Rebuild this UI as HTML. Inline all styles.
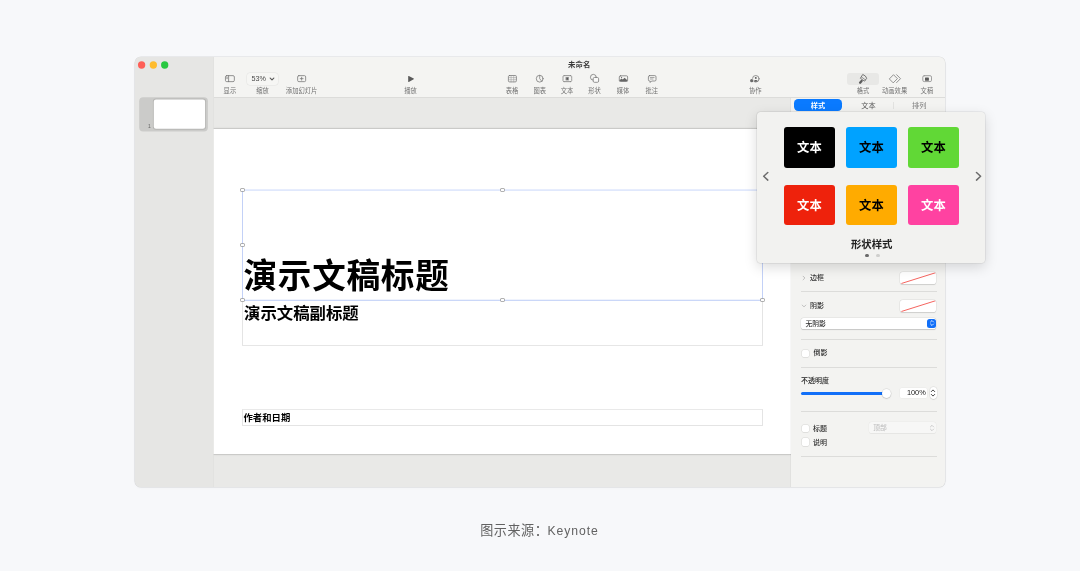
<!DOCTYPE html>
<html lang="zh-CN">
<head>
<meta charset="utf-8">
<title>Keynote</title>
<style>
html,body{margin:0;padding:0;}
body{width:1080px;height:571px;overflow:hidden;background:#f7f8fa;position:relative;
  font-family:"Liberation Sans","Noto Sans CJK SC",sans-serif;color:#333;-webkit-font-smoothing:antialiased;}
.abs{position:absolute;}
#win{position:absolute;left:134.5px;top:56.5px;width:810.5px;height:430px;border-radius:6px;overflow:hidden;
  background:#e9e9e7;box-shadow:0 0 0 0.6px rgba(0,0,0,0.12),0 1px 3px rgba(0,0,0,0.03);}
#sidebar{position:absolute;left:0;top:0;width:78.5px;height:430px;background:#e6e6e4;background-clip:padding-box;border-right:1px solid rgba(222,222,220,0.65);}
#toolbar{position:absolute;left:79.5px;top:0;width:731.5px;height:40.5px;background:#f4f4f2;border-bottom:1px solid #dcdcda;}
#canvas{position:absolute;left:78.5px;top:41.5px;width:579px;height:388.5px;background:#e9e9e7;}
#slide{position:absolute;left:78.5px;top:72.5px;width:579px;height:325px;background:#fff;box-shadow:0 0 0 1px rgba(0,0,0,0.085),0 0 3px rgba(0,0,0,0.14);}
#insp{position:absolute;left:656.5px;top:41.5px;width:155px;height:388.5px;background:#f3f3f1;box-shadow:-1px 0 0 rgba(0,0,0,0.03);}
.tl{position:absolute;top:4.9px;width:7.4px;height:7.4px;border-radius:50%;}
.tb{position:absolute;top:86.3px;transform:translateX(-50%);font-size:6.3px;line-height:9px;color:#727272;white-space:nowrap;text-align:center;}
.ic{position:absolute;transform:translate(-50%,-50%);}
.ic svg{display:block;overflow:visible;}
svg .s{fill:none;stroke:#737373;stroke-width:0.75;stroke-linecap:round;stroke-linejoin:round;}
.tile{position:absolute;width:51.6px;height:40.5px;border-radius:3px;font-size:12.3px;line-height:43.9px;text-align:center;font-weight:700;letter-spacing:0.2px;}
.lbl{position:absolute;font-size:7px;line-height:10px;color:#303030;white-space:nowrap;font-weight:500;}
.hr{position:absolute;left:801px;width:135.7px;height:0.7px;background:#dcdcda;}
.cb{position:absolute;left:801.5px;width:7.2px;height:7.2px;border-radius:1.5px;background:#fff;box-shadow:0 0 0 0.5px rgba(0,0,0,0.11),0 0.5px 0.5px rgba(0,0,0,0.06);}
.sw{position:absolute;left:899.6px;width:36.8px;height:12.3px;border-radius:2.6px;background:#fff;box-shadow:0 0 0 0.5px rgba(0,0,0,0.07),0 0.5px 1px rgba(0,0,0,0.12);overflow:hidden;}
.hd{position:absolute;width:2.3px;height:2.5px;margin:-1.25px 0 0 -1.15px;background:#fff;box-shadow:0 0 0 0.7px #999;border-radius:0.3px;}
</style>
</head>
<body>
<div id="root" style="position:absolute;left:0;top:0;width:1080px;height:571px;will-change:transform;">

<div id="win">
  <div id="canvas"></div>
  <div id="slide"></div>
  <div id="sidebar">
    <svg class="abs" style="left:0;top:0;overflow:visible" width="79" height="80" viewBox="135 57 79 80">
      <circle cx="141.6" cy="65" r="3.65" fill="#fe5f57"/><circle cx="153.35" cy="65" r="3.65" fill="#febc2e"/><circle cx="164.7" cy="65" r="3.65" fill="#28c840"/>
      <rect x="139.2" y="97.3" width="68.7" height="34.3" rx="4" fill="#cbcbc9"/>
      <rect x="152.9" y="98.6" width="53.1" height="31.1" rx="3" fill="#b6b6b4"/>
      <rect x="153.8" y="99.5" width="51.3" height="29.3" rx="2.2" fill="#fff"/>
    </svg>
    <div class="abs" style="left:13.6px;top:66.2px;font-size:5px;line-height:7px;color:#666;">1</div>
  </div>
  <div id="toolbar"></div>
  <div id="insp"></div>
</div>

<!-- TOOLBAR-CONTENT -->
<div id="tbc">
<!-- title -->
<div class="abs" style="left:579.2px;top:60.4px;transform:translateX(-50%);font-size:7.4px;line-height:10px;font-weight:700;color:#3a3a3a;white-space:nowrap;">未命名</div>

<!-- 显示 -->
<div class="tb" style="left:229.9px;">显示</div>

<!-- 缩放 -->
<div class="abs" style="left:247.2px;top:72.7px;width:31px;height:12px;border-radius:3px;box-shadow:0 0 0 0.5px rgba(0,0,0,0.07);background:#f6f6f4;"></div>
<div class="abs" style="left:251.4px;top:74.2px;font-size:7.2px;line-height:9px;color:#484848;">53%</div>
<div class="ic" style="left:272.1px;top:79.1px;"><svg width="5" height="3.4" viewBox="0 0 5 3.4"><path class="s" style="stroke-width:1.1;stroke:#5a5a5a" d="M0.7 0.7L2.5 2.6L4.3 0.7"/></svg></div>
<div class="tb" style="left:262.6px;">缩放</div>

<!-- 添加幻灯片 -->
<div class="tb" style="left:301.6px;">添加幻灯片</div>

<!-- 播放 -->
<div class="tb" style="left:410.6px;">播放</div>

<!-- 表格 -->
<div class="tb" style="left:512.1px;">表格</div>

<!-- 图表 -->
<div class="tb" style="left:539.7px;">图表</div>

<!-- 文本 -->
<div class="tb" style="left:567.1px;">文本</div>

<!-- 形状 -->
<div class="tb" style="left:594.6px;">形状</div>

<!-- 媒体 -->
<div class="tb" style="left:623.1px;">媒体</div>

<!-- 批注 -->
<div class="tb" style="left:651.8px;">批注</div>

<!-- 协作 -->
<div class="tb" style="left:755.3px;">协作</div>

<!-- 格式 -->
<div class="abs" style="left:847px;top:72.8px;width:31.5px;height:12.3px;border-radius:3px;background:#e8e8e6;"></div>
<div class="tb" style="left:863.1px;">格式</div>

<!-- 动画效果 -->
<div class="tb" style="left:894.6px;">动画效果</div>

<!-- 文稿 -->
<div class="tb" style="left:926.9px;">文稿</div>

<svg id="tbicons" class="abs" style="left:0;top:0;overflow:visible;" width="1080" height="120" viewBox="0 0 1080 120">
<g class="s">
<!-- 显示 -->
<rect x="225.45" y="75.65" width="8.9" height="6" rx="1.3"/><path d="M228.6 75.65V81.65"/><path style="stroke-width:0.5" d="M226.5 77.4h1.1M226.5 78.6h1.1"/>
<!-- 添加幻灯片 -->
<rect x="297.65" y="75.65" width="8" height="6" rx="1.2"/><path d="M301.65 77.2V80.1M300.2 78.65H303.1"/>
<!-- 表格 -->
<rect x="508.4" y="75.5" width="8" height="6.4" rx="1.1"/><path style="stroke-width:0.5;stroke:#999" d="M511.1 75.5V81.9M513.7 75.5V81.9M508.4 77.6H516.4M508.4 79.7H516.4"/>
<!-- 图表 -->
<circle cx="539.7" cy="78.7" r="3.4"/><path style="stroke-width:0.7" d="M539.7 75.3V78.7L541.8 81.3"/>
<!-- 文本 -->
<path d="M564 75.65H570.7M564 81.65H570.7"/><path style="stroke-dasharray:1.1 0.8;stroke-width:0.7" d="M564 75.65Q563 75.65 563 76.6V80.7Q563 81.65 564 81.65M570.7 75.65Q571.7 75.65 571.7 76.6V80.7Q571.7 81.65 570.7 81.65"/>
<!-- 形状 -->
<circle cx="593.35" cy="77.25" r="2.9"/>
<!-- 媒体 -->
<rect x="619.3" y="75.8" width="8.3" height="5.7" rx="1.1"/>
<!-- 批注 -->
<path d="M649.6 75.6H654.8Q656 75.6 656 76.8V79.8Q656 81 654.8 81H651.6L650.2 82.5V81H649.6Q648.4 81 648.4 79.8V76.8Q648.4 75.6 649.6 75.6Z"/><path style="stroke-width:0.6" d="M650.3 77.5H654.1M650.3 79H653"/>
<!-- 协作 -->
<circle cx="755.8" cy="78.8" r="3.3"/>
<!-- 动画效果 -->
<path d="M896.6 74.7L900.5 78.65L896.6 82.6"/><path d="M889.6 78.65L893.5 74.7L897.4 78.65L893.5 82.6Z"/>
<!-- 文稿 -->
<rect x="922.8" y="75.7" width="8.7" height="5.9" rx="1.4" style="stroke:#9a9a9a;stroke-width:0.95"/>
</g>
<!-- fills -->
<rect x="565.5" y="76.9" width="3.5" height="3.5" rx="0.4" fill="#9a9a9a"/><rect x="566.5" y="77.7" width="1.5" height="2" fill="#555"/>
<rect x="593.2" y="77.5" width="5.4" height="4.8" rx="1.2" fill="#f9f9f8" stroke="#737373" stroke-width="0.75"/>
<path d="M619.6 81.2V80.2L621.5 78.5L622.8 79.6L624.6 77.7L627.3 80.3V81.2Z" fill="#666"/><circle cx="621.6" cy="77.4" r="0.55" fill="#666"/>
<circle cx="755.8" cy="77.9" r="0.95" fill="#555"/><path d="M753.7 81.1Q755.8 78.7 757.9 81.1Q755.8 82.6 753.7 81.1Z" fill="#555"/>
<circle cx="751.7" cy="80.7" r="2.1" fill="#f4f4f2"/><circle cx="751.7" cy="80.7" r="1.6" fill="#6a6a6a"/>
<path d="M408.2 76.3Q408.2 75.7 408.8 76L413.7 78.6Q414.2 78.95 413.7 79.3L408.8 81.9Q408.2 82.2 408.2 81.6Z" fill="#5a5a5a"/>
<rect x="925" y="77.4" width="3.9" height="3.3" rx="0.5" fill="#5a5a5a"/>
<!-- 格式 brush -->
<g fill="none" stroke="#5c5c5c" stroke-width="0.8" stroke-linejoin="round" stroke-linecap="round">
<path d="M863.1 74.6Q866 75.6 866.7 78.3L864.5 81.2L860.7 78.5Z"/><path d="M861.7 77.1L865.4 79.9" stroke-width="0.6"/>
<path d="M861.6 80.9L860.1 82.7" stroke-width="2.3"/>
</g>
</svg>
<!-- segmented -->
<div class="abs" style="left:793.8px;top:99px;width:48.5px;height:11.5px;border-radius:4.2px;background:#0a7aff;"></div>
<div class="abs" style="left:818px;top:100.6px;transform:translateX(-50%);font-size:7.2px;line-height:10px;color:#fff;font-weight:700;">样式</div>
<div class="abs" style="left:868.4px;top:100.8px;transform:translateX(-50%);font-size:7.2px;line-height:10px;color:#565656;">文本</div>
<div class="abs" style="left:893.2px;top:101.5px;width:0.6px;height:7.5px;background:#e2e2e0;"></div>
<div class="abs" style="left:919.3px;top:100.8px;transform:translateX(-50%);font-size:7.2px;line-height:10px;color:#7c7c7c;">排列</div>
</div>


<!-- INSPECTOR-CONTENT -->
<div id="inspc">
<!-- 边框 -->
<div class="ic" style="left:803.5px;top:277.7px;"><svg width="3.4" height="5" viewBox="0 0 3.4 5"><path class="s" style="stroke:#a8a8a8;stroke-width:0.7" d="M0.8 0.7L2.6 2.5L0.8 4.3"/></svg></div>
<div class="lbl" style="left:809.9px;top:273.1px;">边框</div>
<div class="sw" style="top:271.8px;"><svg width="36.8" height="12.3" viewBox="0 0 36.8 12.3" style="display:block"><path d="M1.4 11.5L35.7 0.7" stroke="#f4524d" stroke-width="0.9" fill="none"/></svg></div>
<div class="hr" style="top:291.2px;"></div>
<!-- 阴影 -->
<div class="ic" style="left:803.5px;top:306px;"><svg width="5" height="3.4" viewBox="0 0 5 3.4"><path class="s" style="stroke:#a8a8a8;stroke-width:0.7" d="M0.7 0.8L2.5 2.6L4.3 0.8"/></svg></div>
<div class="lbl" style="left:809.9px;top:301.1px;">阴影</div>
<div class="sw" style="top:300px;"><svg width="36.8" height="12.3" viewBox="0 0 36.8 12.3" style="display:block"><path d="M1.4 11.5L35.7 0.7" stroke="#f4524d" stroke-width="0.9" fill="none"/></svg></div>
<!-- select 无阴影 -->
<div class="abs" style="left:801.2px;top:318.2px;width:135.2px;height:10.4px;border-radius:2.6px;background:#fff;box-shadow:0 0 0 0.5px rgba(0,0,0,0.06),0 0.6px 1px rgba(0,0,0,0.16);"></div>
<div class="lbl" style="left:805.5px;top:318.6px;font-size:6.8px;">无阴影</div>
<div class="abs" style="left:926.7px;top:318.8px;width:9.5px;height:9.1px;border-radius:2.5px;background:#116ff8;"></div>
<div class="ic" style="left:931.5px;top:323.3px;"><svg width="5.6" height="8" viewBox="0 0 5.6 8"><path d="M1.3 3L2.8 1.5L4.3 3M1.3 5L2.8 6.5L4.3 5" fill="none" stroke="#fff" stroke-width="0.8" stroke-linecap="round" stroke-linejoin="round"/></svg></div>
<div class="hr" style="top:338.5px;"></div>
<!-- 倒影 -->
<div class="cb" style="top:349.7px;"></div>
<div class="lbl" style="left:813.4px;top:348.1px;">倒影</div>
<div class="hr" style="top:367.1px;"></div>
<!-- 不透明度 -->
<div class="lbl" style="left:801px;top:375.8px;font-weight:500;color:#222;">不透明度</div>
<div class="abs" style="left:801px;top:391.6px;width:84px;height:3px;border-radius:1.5px;background:#116ff8;"></div>
<div class="abs" style="left:882.3px;top:388.6px;width:9px;height:9px;border-radius:50%;background:#fff;box-shadow:0 0 0 0.4px rgba(0,0,0,0.1),0 0.5px 1.2px rgba(0,0,0,0.22);"></div>
<div class="abs" style="left:899.5px;top:388px;width:27.8px;height:10px;border-radius:1.5px;background:#fff;box-shadow:0 0 0 0.5px rgba(0,0,0,0.04);"></div>
<div class="lbl" style="left:925.8px;top:388px;transform:translateX(-100%);font-size:7.4px;color:#222;">100%</div>
<div class="abs" style="left:929.8px;top:387.3px;width:7.2px;height:11.4px;border-radius:3.4px;background:#fff;box-shadow:0 0 0 0.4px rgba(0,0,0,0.1),0 0.5px 1px rgba(0,0,0,0.15);"></div>
<div class="ic" style="left:933.4px;top:393px;"><svg width="5.6" height="10.2" viewBox="0 0 5.6 10.2"><path class="s" style="stroke:#3c3c3c;stroke-width:0.95" d="M1.1 3.7L2.8 2L4.5 3.7M1.1 6.5L2.8 8.2L4.5 6.5"/></svg></div>
<div class="hr" style="top:411.3px;"></div>
<!-- 标题 / 说明 -->
<div class="cb" style="top:424.8px;"></div>
<div class="lbl" style="left:813.1px;top:423.5px;">标题</div>
<div class="abs" style="left:868.9px;top:422.4px;width:67.6px;height:10.2px;border-radius:2.6px;background:#f7f7f6;box-shadow:0 0 0 0.5px rgba(0,0,0,0.03),0 0.5px 0.8px rgba(0,0,0,0.04);"></div>
<div class="lbl" style="left:873.3px;top:422.5px;font-size:6.8px;color:#c2c2c2;">顶部</div>
<div class="ic" style="left:931.5px;top:427.6px;"><svg width="5.6" height="8.4" viewBox="0 0 5.6 8.4"><path class="s" style="stroke:#bcbcbc;stroke-width:0.75" d="M1.2 3.1L2.8 1.5L4.4 3.1M1.2 5.3L2.8 6.9L4.4 5.3"/></svg></div>
<div class="cb" style="top:438.4px;"></div>
<div class="lbl" style="left:813.1px;top:437.7px;">说明</div>
<div class="hr" style="top:456.3px;"></div>
</div>


<!-- SLIDE-CONTENT -->
<div id="slidec">
<!-- subtitle box -->
<div class="abs" style="left:242px;top:301px;width:1px;height:44px;background:#e4e4e4;"></div>
<div class="abs" style="left:762px;top:301px;width:1px;height:44px;background:#e4e4e4;"></div>
<div class="abs" style="left:242px;top:345px;width:521px;height:1px;background:#e6e6e6;"></div>
<!-- author box -->
<div class="abs" style="left:242px;top:409px;width:521px;height:17px;box-sizing:border-box;border:1px solid #e4e4e4;border-top-color:#e9e9e9;"></div>
<!-- title selection box -->
<div class="abs" style="left:242px;top:190px;width:1px;height:110px;background:#c3d1f7;"></div>
<div class="abs" style="left:762px;top:190px;width:1px;height:110px;background:#c3d1f7;"></div>
<div class="abs" style="left:242px;top:189px;width:521px;height:1px;background:#e7edfd;"></div>
<div class="abs" style="left:242px;top:190px;width:521px;height:1px;background:#e0e8fc;"></div>
<div class="abs" style="left:242px;top:299px;width:521px;height:1px;background:#eff3fd;"></div>
<div class="abs" style="left:242px;top:300px;width:521px;height:1px;background:#cad7f8;"></div>
<div class="abs" style="left:243.5px;top:251.6px;font-size:33.6px;line-height:50px;font-weight:700;color:#000;white-space:nowrap;letter-spacing:0.76px;">演示文稿标题</div>
<div class="abs" style="left:244px;top:300.9px;font-size:16.4px;line-height:24px;font-weight:700;color:#000;white-space:nowrap;">演示文稿副标题</div>
<div class="abs" style="left:243.4px;top:410.9px;font-size:9.4px;line-height:13px;font-weight:700;color:#000;white-space:nowrap;">作者和日期</div>
<!-- handles -->
<div class="hd" style="left:242.5px;top:190px;"></div>
<div class="hd" style="left:502.5px;top:190px;"></div>
<div class="hd" style="left:242.5px;top:245px;"></div>
<div class="hd" style="left:242.5px;top:300.2px;"></div>
<div class="hd" style="left:502.5px;top:300.2px;"></div>
<div class="hd" style="left:762.5px;top:300.2px;"></div>
</div>


<!-- POPOVER -->
<div id="pop" class="abs" style="left:756.6px;top:111.8px;width:228.8px;height:151px;border-radius:3.5px;background:#f2f2f0;box-shadow:0 0 0 0.5px rgba(0,0,0,0.08),0 4px 13px rgba(0,0,0,0.15),0 0 2px rgba(0,0,0,0.07);"></div>
<div id="popc">
<div class="tile" style="left:783.6px;top:127.1px;background:#000;color:#fff;">文本</div>
<div class="tile" style="left:845.7px;top:127.1px;background:#00a2ff;color:#000;">文本</div>
<div class="tile" style="left:907.8px;top:127.1px;background:#61d836;color:#000;">文本</div>
<div class="tile" style="left:783.6px;top:184.7px;background:#ee220c;color:#fff;">文本</div>
<div class="tile" style="left:845.7px;top:184.7px;background:#ffab00;color:#000;">文本</div>
<div class="tile" style="left:907.8px;top:184.7px;background:#ff42a1;color:#fff;">文本</div>
<svg class="abs" style="left:0;top:0;overflow:visible;pointer-events:none" width="1080" height="300" viewBox="0 0 1080 300"><path d="M767.8 172.5L763.7 176.3L767.8 180.1M976.5 172.5L980.6 176.3L976.5 180.1" fill="none" stroke="#6c6c6c" stroke-width="1.5" stroke-linecap="round" stroke-linejoin="round"/></svg>
<div class="abs" style="left:871.7px;top:236.7px;transform:translateX(-50%);font-size:10.4px;line-height:15px;color:#222;font-weight:700;white-space:nowrap;">形状样式</div>
<div class="abs" style="left:864.9px;top:253.6px;width:3.9px;height:3.9px;border-radius:50%;background:#6a6a6a;"></div>
<div class="abs" style="left:875.9px;top:253.6px;width:3.9px;height:3.9px;border-radius:50%;background:#cfcfcd;"></div>
</div>


<div class="abs" style="left:480.2px;top:521.2px;white-space:nowrap;font-size:13.1px;line-height:20px;color:#626262;letter-spacing:0.55px;">图示来源：<span style="font-size:12.2px;letter-spacing:0.93px;position:relative;left:-0.9px;top:-0.1px;">Keynote</span></div>

</div>
</body>
</html>
